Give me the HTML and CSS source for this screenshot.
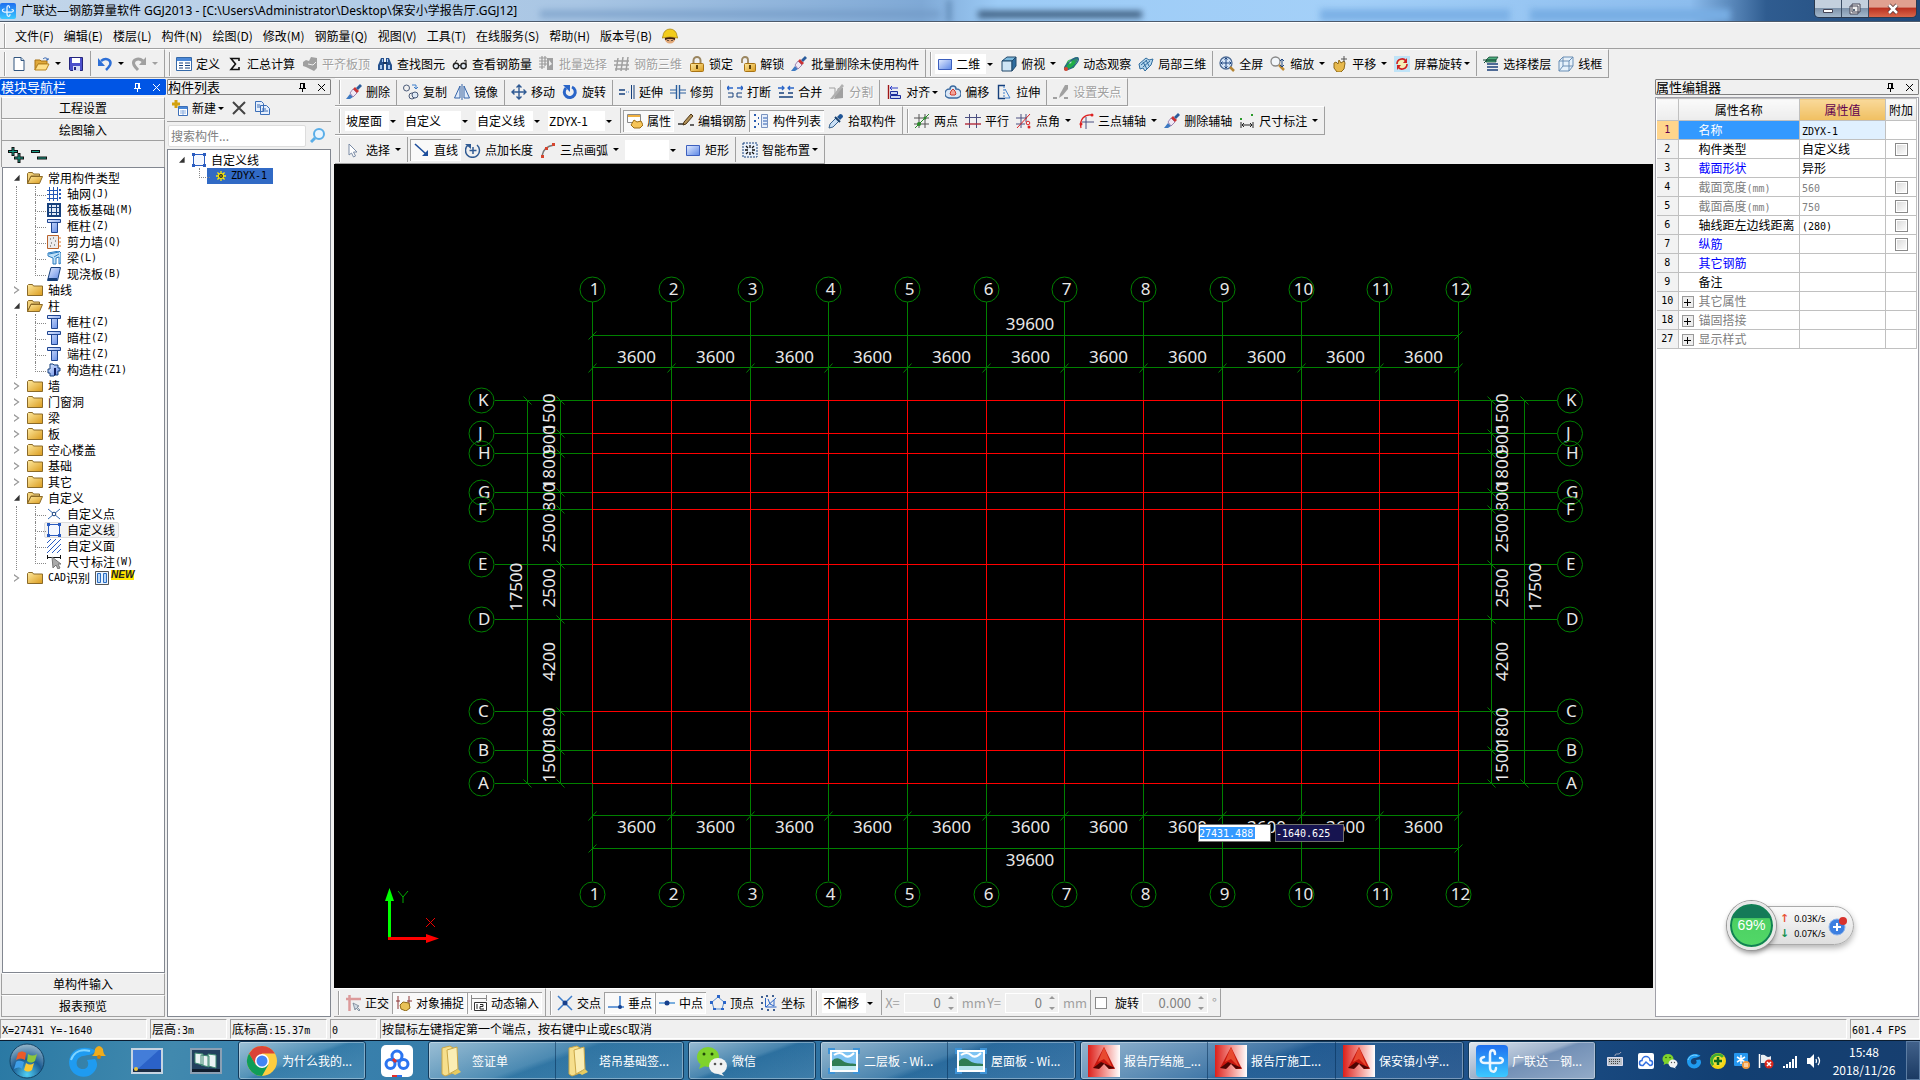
FILE: index.html
```html
<!DOCTYPE html>
<html lang="zh-CN">
<head>
<meta charset="utf-8">
<title>广联达—钢筋算量软件 GGJ2013</title>
<link rel="stylesheet" href="styles.css">
</head>
<body>
<svg class="sprite" aria-hidden="true">
<defs>
<linearGradient id="gBlue" x1="0" y1="0" x2="1" y2="1"><stop offset="0" stop-color="#e4edff"/><stop offset="1" stop-color="#5b86e6"/></linearGradient>
<linearGradient id="gGold" x1="0" y1="0" x2="1" y2="1"><stop offset="0" stop-color="#ffeaa0"/><stop offset="1" stop-color="#d99a1c"/></linearGradient>
<linearGradient id="gRed" x1="0" y1="0" x2="1" y2="0"><stop offset="0" stop-color="#dd1f1a"/><stop offset=".6" stop-color="#f5a7a2"/><stop offset="1" stop-color="#fff"/></linearGradient>
<radialGradient id="gOrb" cx=".5" cy=".9" r=".9"><stop offset="0" stop-color="#4fd0f5"/><stop offset=".5" stop-color="#1c5c93"/><stop offset="1" stop-color="#9ab9cc"/></radialGradient>
<linearGradient id="gApp" x1="0" y1="0" x2="0" y2="1"><stop offset="0" stop-color="#1e6ff0"/><stop offset="1" stop-color="#3cc9ff"/></linearGradient>
</defs>
<symbol id="new" viewBox="0 0 16 16"><path d="M3 1.500h7l3 3v10H3z" fill="#fff" stroke="#31557f"/><path d="M10 1.500v3h3" fill="#cfe0f4" stroke="#31557f"/></symbol>
<symbol id="open" viewBox="0 0 16 16"><path d="M1 4h5l1 1h6v3H4l-3 6z" fill="#e0a93a" stroke="#a87314"/><path d="M4 8h11l-3 6H1z" fill="#ffe08a" stroke="#b98520"/><path d="M9 3c2-2 4-1 5 1m0-2v2h-2" fill="none" stroke="#2b5fb0"/></symbol>
<symbol id="save" viewBox="0 0 16 16"><path d="M1.500 1.500h13v13h-12l-1-1z" fill="#4c50cc" stroke="#24257c"/><path d="M4 2h8v5H4z" fill="#fff"/><path d="M5 10h7v5H5z" fill="#d6dbf5"/><path d="M6 11h2v3H6z" fill="#24257c"/></symbol>
<symbol id="undo" viewBox="0 0 16 16"><path d="M4 5c5-4 11-1 9 4-1 2-2 3-4 5" fill="none" stroke="#2d6fd6" stroke-width="2.500"/><path d="M1 2v8h7z" fill="#2d6fd6"/></symbol>
<symbol id="redo" viewBox="0 0 16 16"><path d="M12 5C7 1 1 4 3 9c1 2 2 3 4 5" fill="none" stroke="#a0a0a0" stroke-width="3"/><path d="M15 1v8H8z" fill="#a0a0a0"/></symbol>
<symbol id="define" viewBox="0 0 16 16"><path d="M.5 1.500h15v13H.5z" fill="#fff" stroke="#3569a8"/><path d="M1 2h14v3H1z" fill="#4a88d8"/><path d="M3 7h4M3 9.500h4M3 12h4M9 7h5M9 9.500h5M9 12h5" stroke="#16407c"/></symbol>
<symbol id="sigma" viewBox="0 0 16 16"><path d="M12 5V2.500H4L8.500 8 4 13.500h8V11" fill="none" stroke="#111" stroke-width="1.600"/></symbol>
<symbol id="flat" viewBox="0 0 16 16"><path d="M1 6l3-2 3 1 2-4 6 1v10l-3 3-6-3-2-1-3-1z" fill="#a0a0a0"/><path d="M6 8l5 1 3-3" fill="none" stroke="#eee"/></symbol>
<symbol id="find" viewBox="0 0 16 16"><path d="M2 7l2-5h3v12H1V9zM9 2h3l2 5 1 2v5H9z" fill="#24508d"/><path d="M3 9h2v4H3zM11 9h2v4h-2zM5 3h1v3H5zM10 3h1v3h-1z" fill="#a8c8f0"/><path d="M6 6h4v2H6z" fill="#16335f"/></symbol>
<symbol id="glasses" viewBox="0 0 16 16"><circle cx="4" cy="10" r="2.700" fill="#dfe8f2" stroke="#222" stroke-width="1.400"/><circle cx="11.500" cy="10" r="2.700" fill="#dfe8f2" stroke="#222" stroke-width="1.400"/><path d="M6.500 9.500h2M1.500 9L5 4M14 9V4l-2 1" fill="none" stroke="#222"/></symbol>
<symbol id="batch" viewBox="0 0 16 16"><path d="M0 2h8M0 5h8M0 8h8M0 11h6M3 0v13M6 0v10" stroke="#999" stroke-width="1.200"/><path d="M8 2h6v12H8z" fill="#a0a0a0"/><path d="M10 4v6l3-2z" fill="#eee"/></symbol>
<symbol id="rebar3" viewBox="0 0 16 16"><path d="M0 5h15M0 9h15M1 13h14M4 2L2 15M9 1L7 15M14 1l-2 14" stroke="#a0a0a0" stroke-width="1.500"/></symbol>
<symbol id="lock" viewBox="0 0 16 16"><path d="M4.500 8V4.500a3.500 3.500 0 0 1 7 0V8" fill="none" stroke="#9b8660" stroke-width="2"/><rect x="1.500" y="7.500" width="13" height="8" rx="1" fill="url(#gGold)" stroke="#a87314"/><path d="M7 9h2v4H7z" fill="#5f430a"/></symbol>
<symbol id="unlock" viewBox="0 0 16 16"><path d="M2 7V4a3 3 0 0 1 6 0v4" fill="none" stroke="#9b8660" stroke-width="1.800"/><rect x="4.500" y="7.500" width="11" height="8" rx="1" fill="url(#gGold)" stroke="#a87314"/><path d="M9 9h2v4H9z" fill="#5f430a"/></symbol>
<symbol id="brush" viewBox="0 0 16 16"><path d="M0 15l4-5 3 3-3 2z" fill="#3d79c2"/><path d="M4 9l3-4 4 4-4 4z" fill="#f0e8f4" stroke="#7a5a96" stroke-width=".7"/><path d="M7 5l2-2 4 4-2 2z" fill="#c33"/><path d="M10 4l4-4 2 2-4 4z" fill="#2a5c9c"/></symbol>
<symbol id="rect" viewBox="0 0 16 16"><path d="M1.500 3.500h13v10h-13z" fill="url(#gBlue)" stroke="#3c5fbe"/></symbol>
<symbol id="cube" viewBox="0 0 16 16"><path d="M1 5l5-4h9l-3 4z" fill="#7cb9dd" stroke="#22496b"/><path d="M1 5h10v10H1z" fill="#cfe5f5" stroke="#22496b"/><path d="M11 5l4-4v9l-4 5z" fill="#2f6c9e" stroke="#22496b"/></symbol>
<symbol id="orbit" viewBox="0 0 16 16"><path d="M1 13C0 9 10 0 15 1c2 4-7 13-13 13z" fill="#2f8f6a"/><circle cx="8" cy="8" r="4.500" fill="#1fae47"/><circle cx="7" cy="6" r="1.500" fill="#b5f0bf"/><path d="M2 14C0 10 11 1 15 2c2 3-6 12-13 12" fill="none" stroke="#2a5c8e" stroke-width="1.200"/><circle cx="3" cy="13" r="2" fill="#d6452e"/></symbol>
<symbol id="local3" viewBox="0 0 16 16"><path d="M1 8l7-6 3 2 4-1-2 6-6 6-2-3-3 1z" fill="#b7d8ee" stroke="#2f6c9e"/><path d="M3 9l6-5M5 11l7-6M8 4l3 6M5 6l4 7" stroke="#2f6c9e"/></symbol>
<symbol id="full" viewBox="0 0 16 16"><circle cx="7" cy="7" r="6" fill="#d8e8fa" stroke="#4c6a94" stroke-width="1.300"/><path d="M11 11l4 4" stroke="#b58534" stroke-width="2.500"/><path d="M7 2v10M2 7h10M5.500 3.500L7 2l1.500 1.500M5.500 10.500L7 12l1.500-1.500M3.500 5.500L2 7l1.500 1.500M10.500 5.500L12 7l-1.500 1.500" fill="none" stroke="#1d4480"/></symbol>
<symbol id="zoomi" viewBox="0 0 16 16"><circle cx="5.500" cy="5.500" r="4.500" fill="#f2f6fa" stroke="#888" stroke-width="1.300"/><path d="M9 9l5 5" stroke="#c08a35" stroke-width="2.500"/><path d="M12 3v7M10 5l2-2 2 2M10 9l2 2 2-2" fill="none" stroke="#1d4480"/></symbol>
<symbol id="hand" viewBox="0 0 16 16"><path d="M2 7l2-1 2 2 1-4 2 3 3-2 1 2-1 6-3 3H5L2 12z" fill="#e7b94c" stroke="#8f6a18"/><path d="M12 0v6M9 3h6" stroke="#555"/></symbol>
<symbol id="rot" viewBox="0 0 16 16"><path d="M0 0h16v16H0z" fill="#bfe3f7"/><path d="M4 4h9v9H4z" fill="#f4efb5"/><path d="M3 8a5 5 0 0 1 9-3M13 8a5 5 0 0 1-9 3" fill="none" stroke="#d02020" stroke-width="1.600"/><path d="M13 2v5H9zM3 14V9h4z" fill="#d02020"/></symbol>
<symbol id="floors" viewBox="0 0 16 16"><path d="M3 4l3-3h9l-2 3zM3 4h10v2H3z" fill="#4fae7d" stroke="#154d38" stroke-width=".8"/><path d="M4 8h11M4 11h11M4 14h11" stroke="#1a3f78" stroke-width="1.600"/><path d="M1 7l3-3M0 4h3" stroke="#154d38"/></symbol>
<symbol id="wire" viewBox="0 0 16 16"><path d="M1 5l4-4h10v9l-4 5H1zM1 5h10v10M11 5l4-4M5 1v9h10M5 10l-4 5" fill="#e5f1fb" stroke="#6a8fb5"/></symbol>
<symbol id="copy" viewBox="0 0 16 16"><circle cx="3.500" cy="4" r="3" fill="none" stroke="#4a5a78"/><circle cx="9" cy="12" r="3" fill="none" stroke="#4a5a78"/><circle cx="12" cy="11" r="3" fill="#dde8f6" stroke="#4a5a78"/><path d="M9 1h4v4m-2-2l2 2 2-2" fill="none" stroke="#3e7ecb"/></symbol>
<symbol id="mirror" viewBox="0 0 16 16"><path d="M6 2v12H.5zM10 2v12h5.500z" fill="#e1ecfb" stroke="#3564a8"/><path d="M8 0v16" stroke="#3564a8"/></symbol>
<symbol id="move" viewBox="0 0 16 16"><path d="M8 1v14M1 8h14M5.500 3.500L8 1l2.500 2.500M5.500 12.500L8 15l2.500-2.500M3.500 5.500L1 8l2.500 2.500M12.500 5.500L15 8l-2.500 2.500" fill="none" stroke="#2f5a93" stroke-width="1.400"/></symbol>
<symbol id="rotate" viewBox="0 0 16 16"><path d="M10 3a5.500 5.500 0 1 1-6 1" fill="none" stroke="#2a65c8" stroke-width="3"/><path d="M1 1h7v7z" fill="#2a65c8"/></symbol>
<symbol id="extend" viewBox="0 0 16 16"><path d="M0 6h6M0 10h6" stroke="#16407c" stroke-width="1.500"/><path d="M7 8h4" stroke="#3e7ecb" stroke-dasharray="1 1"/><path d="M12.500 1v14M15 1v14" stroke="#16407c"/></symbol>
<symbol id="trim" viewBox="0 0 16 16"><path d="M0 6h6M0 9h6M10 6h6M10 9h6" stroke="#2a5f9e"/><path d="M6.500 1v14M9.500 1v14" stroke="#2a5f9e" stroke-width="1.400"/></symbol>
<symbol id="brk" viewBox="0 0 16 16"><path d="M0 4h6M2 2L0 4l2 2M10 4h6M14 2l2 2-2 2" fill="none" stroke="#2a65c8" stroke-width="1.300"/><path d="M1 9h5v4H1M15 9h-5v4h5" fill="none" stroke="#16407c"/></symbol>
<symbol id="merge" viewBox="0 0 16 16"><path d="M0 4h6M4 2l2 2-2 2M10 4h6M12 2l-2 2 2 2" fill="none" stroke="#2a65c8" stroke-width="1.300"/><path d="M1 9h5M1 13h14M15 9h-5" fill="none" stroke="#16407c" stroke-width="1.400"/></symbol>
<symbol id="split" viewBox="0 0 16 16"><path d="M0 4h6v8h8" fill="none" stroke="#a0a0a0"/><path d="M5 15l4-11h5v10z" fill="#a0a0a0"/><path d="M13 0l2 2L4 15l-3 0z" fill="#b0b0b0"/></symbol>
<symbol id="align" viewBox="0 0 16 16"><path d="M2.500 1v14" stroke="#a01616" stroke-width="1.400"/><path d="M4 4h8M6 2L4 4l2 2" fill="none" stroke="#2a3cc8"/><path d="M4.500 7.500h7v3h-7zM4.500 11.500h10v3h-10z" fill="#cdd6f5" stroke="#1c2d9c"/></symbol>
<symbol id="offset" viewBox="0 0 16 16"><path d="M5 5a3 3 0 0 1 6 0 4.500 4.500 0 0 1 1 9H4a4.500 4.500 0 0 1 1-9z" fill="#d9e7f6" stroke="#3b6aa0" stroke-width="1.500"/><path d="M6 7l2-2 2 2 1 3-1 1H6l-1-1z" fill="#f2a59b" stroke="#cf3b2c"/></symbol>
<symbol id="stretch" viewBox="0 0 16 16"><path d="M9 1.500H2.500v13H9" fill="none" stroke="#16407c" stroke-width="1.400"/><path d="M8 2v12" stroke="#3e7ecb" stroke-dasharray="2 1"/><path d="M9 5l5 9H9" fill="none" stroke="#3e7ecb"/></symbol>
<symbol id="grip" viewBox="0 0 16 16"><path d="M0 14h4M11 14h4" stroke="#a0a0a0" stroke-width="2"/><path d="M6 14l1-4 5-9h3v4l-5 6z" fill="#a0a0a0"/></symbol>
<symbol id="prop" viewBox="0 0 16 16"><path d="M.5 1.500h13v8H.5z" fill="#fff" stroke="#888"/><path d="M1 2h12v2H1z" fill="#f0b040"/><path d="M4 12l3-5 3 2 4-1 2 4-3 3H7z" fill="#f6c558" stroke="#9c6d14"/></symbol>
<symbol id="edit" viewBox="0 0 16 16"><path d="M0 11h7M12 12h4" stroke="#333" stroke-width="1.600"/><path d="M5 12l1-3 7-8 2 2-7 8z" fill="#b4935a" stroke="#4a3414"/></symbol>
<symbol id="list" viewBox="0 0 16 16"><path d="M1 1h2v2H1zM1 7h2v2H1zM1 13h2v2H1zM5 4h1v2H5zM5 10h1v2H5z" fill="#2a5cb0"/><path d="M8.500 1.500h6v13h-6z" fill="#e8f0fc" stroke="#7a94c0"/><path d="M10 5h4M10 8h4M10 11h4" stroke="#2a5cb0"/></symbol>
<symbol id="pick" viewBox="0 0 16 16"><path d="M1 15l1-4 6-6 3 3-6 6z" fill="#c9dff5" stroke="#35618f"/><path d="M7 4l5 5" stroke="#173f6c" stroke-width="2"/><path d="M9 4l3-3q3 0 3 3l-3 3z" fill="#1f5596"/></symbol>
<symbol id="twop" viewBox="0 0 16 16"><path d="M0 5h15M0 11h15M5 1v14M11 1v14" stroke="#555"/><path d="M1 15L15 1" stroke="#2a8a2a"/><circle cx="5" cy="11" r="2" fill="#2a8a2a"/><circle cx="11" cy="5" r="1.500" fill="#2a8a2a"/></symbol>
<symbol id="para" viewBox="0 0 16 16"><path d="M4.500 1v14M11.500 1v14" stroke="#4a4f80"/><path d="M0 4.500h16" stroke="#4a4f80"/><path d="M0 11h16" stroke="#b02a3c" stroke-width="1.400"/></symbol>
<symbol id="pang" viewBox="0 0 16 16"><path d="M0 5h11M0 11h9M5 1v14M10 1v8" stroke="#4a4f80"/><path d="M1 15L14 1" stroke="#d22"/><circle cx="12" cy="10" r="1.800" fill="none" stroke="#d22"/><circle cx="13" cy="14" r="1.500" fill="#d22"/></symbol>
<symbol id="arc3" viewBox="0 0 16 16"><path d="M3 15C1 6 7 1 14 2" fill="none" stroke="#d22" stroke-width="1.300"/><path d="M8 4v12M4 9h12" stroke="#4a4f80"/><circle cx="3" cy="11" r="1.500" fill="#d22"/><circle cx="14" cy="2" r="1.500" fill="#d22"/></symbol>
<symbol id="dimi" viewBox="0 0 16 16"><path d="M1 5h2v2H1zM12 1h2v2h-2z" fill="#2a9a2a"/><path d="M2 9v6M14 9v6M3 12h10M5 10l-2 2 2 2M11 10l2 2-2 2" fill="none" stroke="#222"/></symbol>
<symbol id="sel" viewBox="0 0 16 16"><path d="M3 2l8 8H7.500l2 4-2 1-2-4L3 13z" fill="#fff" stroke="#7a8ba5"/></symbol>
<symbol id="line" viewBox="0 0 16 16"><path d="M1 2l11 10" stroke="#1d4e9c" stroke-width="1.600"/><path d="M14 8v6H8z" fill="#1d4e9c"/></symbol>
<symbol id="plen" viewBox="0 0 16 16"><path d="M8 5v7M4.500 8.500h7M3 3a7 7 0 1 0 9 0" fill="none" stroke="#2f5a93" stroke-width="1.500"/><path d="M0 2h6v5z" fill="#2f5a93"/></symbol>
<symbol id="arcp" viewBox="0 0 16 16"><path d="M2 14C3 7 7 4 14 3" fill="none" stroke="#777" stroke-width="1.500"/><path d="M1 13h3v3H1zM5 5h3v3H5zM12 1h3v3h-3z" fill="#d6452e"/></symbol>
<symbol id="smart" viewBox="0 0 16 16"><path d="M1 1h14v14H1z" fill="#eaf1fb" stroke="#16407c" stroke-dasharray="2 1"/><path d="M8 3v3M8 10v3M3 8h3M10 8h3M4 4l2 2M12 4l-2 2M4 12l2-2M12 12l-2-2" stroke="#111" stroke-width="1.300"/></symbol>
<symbol id="ortho" viewBox="0 0 16 16"><path d="M1 4h15M4.500 0v16" stroke="#dc9a9a" stroke-width="2.500"/><path d="M8 8l6 3-2 1 3 3-1 1-3-3-1 2z" fill="#cfd9e2" stroke="#69798a" stroke-width=".7"/></symbol>
<symbol id="snap" viewBox="0 0 16 16"><path d="M2 1v13M13 1v13M0 6h4M11 6h5" stroke="#8c3434"/><path d="M4 10l3-3 6 1 1 5-4 3-5-2z" fill="#e8c158" stroke="#8f6a18"/></symbol>
<symbol id="dyn" viewBox="0 0 16 16"><path d="M.5 0v15M0 3.500h16M15.500 0v6" stroke="#888"/><path d="M3.500 7.500h12v8h-12z" fill="#fff" stroke="#333"/><path d="M6 9v5M9 9.500h3v2H9v2.500h4" fill="none" stroke="#222"/></symbol>
<symbol id="cross" viewBox="0 0 16 16"><path d="M1 1l14 14M15 1L1 15" stroke="#3e7ecb" stroke-width="1.500"/><circle cx="8" cy="8" r="2.500" fill="#163f8c"/></symbol>
<symbol id="perp" viewBox="0 0 16 16"><path d="M0 12h16M12 1v11" stroke="#3e7ecb" stroke-width="1.600"/><circle cx="12" cy="12" r="2" fill="#163f8c"/></symbol>
<symbol id="mid" viewBox="0 0 16 16"><path d="M0 8h16" stroke="#5b9bd8" stroke-width="1.600"/><circle cx="8" cy="8" r="2.500" fill="#163f8c"/></symbol>
<symbol id="vert" viewBox="0 0 16 16"><path d="M8 2l6 5-2 7H4L2 7z" fill="none" stroke="#5b8fd0"/><path d="M7 0h3v3H7zM0 6h3v3H0zM13 6h3v3h-3zM3 13h3v2H3zM11 13h3v2h-3z" fill="#2a65c8"/></symbol>
<symbol id="coord" viewBox="0 0 16 16"><path d="M4.500 3v9h11M5 12l10-9M7 4l2 5 4 2V5" fill="none" stroke="#2a65c8"/><path d="M0 1h2v2H0zM5 0h2v2H5zM11 0h2v2h-2zM0 13h2v2H0zM6 14h2v2H6zM12 14h2v2h-2zM0 7h2v2H0z" fill="#3f5f90"/></symbol>
<symbol id="addc" viewBox="0 0 16 16"><path d="M4 0v8M0 4h8" stroke="#d3a10f" stroke-width="3"/><path d="M6.500 6.500h9v9h-9z" fill="#fff" stroke="#3c6fb8"/><path d="M7 7h8v2H7z" fill="#4a88d8"/><path d="M8 11h6M8 13h6M11 10v5" stroke="#8fb0e0"/></symbol>
<symbol id="del" viewBox="0 0 16 16"><path d="M2 2l12 12M14 2L2 14" stroke="#444" stroke-width="2"/></symbol>
<symbol id="cpy2" viewBox="0 0 16 16"><path d="M1.500 1.500h6l2 2v8h-8zM6.500 5.500h6l3 3v6h-9z" fill="#e6effc" stroke="#3c6fb8"/><path d="M8 9h4M8 11h6M3 5h3M3 7h3" stroke="#3c6fb8"/></symbol>
<symbol id="mag" viewBox="0 0 16 16"><circle cx="9" cy="6" r="5" fill="#e9f5ff" stroke="#5aaee8" stroke-width="2"/><path d="M5 10l-4 4" stroke="#5aaee8" stroke-width="3"/></symbol>
<symbol id="folder" viewBox="0 0 16 12"><path d="M.5 11.500V1.500l1-1h4l1 1.500h9v9.500z" fill="url(#gGold)" stroke="#8b6a28"/></symbol>
<symbol id="foldero" viewBox="0 0 16 12"><path d="M.5 11.500V1.500l1-1h4l1 1.500h6v2H4z" fill="#f3d27a" stroke="#8b6a28"/><path d="M.5 11.500l3.500-7h11.500l-3 7z" fill="url(#gGold)" stroke="#8b6a28"/></symbol>
<symbol id="grid" viewBox="0 0 14 14"><path d="M0 3.500h11M0 7.500h11M0 11.500h11M2.500 0v14M6.500 0v14M10.500 0v14" stroke="#2559b8"/><path d="M12 2h2v2h-2zM12 6h2v2h-2zM12 10h2v2h-2z" fill="#2559b8"/></symbol>
<symbol id="raft" viewBox="0 0 14 14"><path d="M1 1h12v12H1z" fill="#dfe9f8" stroke="#16407c" stroke-width="2"/><path d="M4.500 1v12M9.500 1v12M1 4.500h12M1 9.500h12" stroke="#16407c"/></symbol>
<symbol id="col" viewBox="0 0 14 14"><path d="M.5.5h13v3h-3v10h-6v-10h-4z" fill="url(#gBlue)" stroke="#1f4590"/><path d="M1 3.500h12" stroke="#1f4590"/></symbol>
<symbol id="wall" viewBox="0 0 14 14"><path d="M.5.500h11v13H.5z" fill="#ececec" stroke="#b8622c"/><path d="M3 4h1M6 3h1M8 6h1M4 8h1M7 10h1M3 11h1" stroke="#444"/><path d="M11 3h3M11 7h3M11 11h3" stroke="#d9762b"/></symbol>
<symbol id="beam" viewBox="0 0 14 14"><path d="M1 2l11-2 2 2v10l-2 1V6L9 7v6H6V7L1 5z" fill="#bfe0f8" stroke="#2b7cc0"/><path d="M2 3l10-2M7 6l5-3" stroke="#2b7cc0"/></symbol>
<symbol id="slab" viewBox="0 0 14 14"><path d="M4 .5h9.500l-3 13H.5z" fill="url(#gBlue)" stroke="#16407c"/><path d="M1 12h9" stroke="#16407c" stroke-width="2"/></symbol>
<symbol id="scol" viewBox="0 0 14 14"><path d="M3 1h3l1 1h4v3h2v3h-2v4H8l-1 1H3v-3H1V6h2z" fill="url(#gBlue)" stroke="#16407c"/><path d="M8 5v7" stroke="#101f60" stroke-width="2"/></symbol>
<symbol id="cpt" viewBox="0 0 14 14"><path d="M1 2l12 10M13 2L1 12" stroke="#2f66b0"/><circle cx="7" cy="7" r="1.800" fill="#fff" stroke="#16407c"/></symbol>
<symbol id="cline" viewBox="0 0 14 14"><path d="M1.500 1.500h11v11h-11z" fill="#f4f8ff" stroke="#2a5cc0"/><path d="M0 0h3v3H0zM11 0h3v3h-3zM0 11h3v3H0zM11 11h3v3h-3z" fill="#2a5cc0"/></symbol>
<symbol id="cface" viewBox="0 0 14 14"><path d="M0 4l4-4M0 9l9-9M0 14L14 0M5 14l9-9M10 14l4-4" stroke="#2a5cc0"/></symbol>
<symbol id="cdim" viewBox="0 0 14 14"><path d="M.5 0v4M13.500 0v4M0 2.500h14" stroke="#111"/><path d="M5 2l9 7H11l2 4-2 1-2-4-3 3z" fill="#aaa" stroke="#777"/></symbol>
<symbol id="cad" viewBox="0 0 14 14"><path d="M.5.500h13v13H.5z" fill="#eaf4ff" stroke="#555"/><path d="M2.500 2.500h3v9h-3zM8.500 2.500h3v9h-3z" fill="#bcd9f8" stroke="#2a6cc0"/></symbol>
<symbol id="gear" viewBox="0 0 14 14"><path d="M7 0v14M0 7h14M2 2l10 10M12 2L2 12" stroke="#fce808" stroke-width="1.800"/><circle cx="7" cy="7" r="3.500" fill="#222" stroke="#fce808" stroke-width="1.500"/><circle cx="7" cy="7" r="1" fill="#fce808"/></symbol>
<symbol id="pin" viewBox="0 0 9 9"><path d="M2.500 0v5M2 .5h5M5.500 0v5M6.500 0v5M1 5.500h7M4.500 6v3" fill="none" stroke="currentColor"/></symbol>
<symbol id="x" viewBox="0 0 9 9"><path d="M1 1l7 7M8 1L1 8" stroke="currentColor"/></symbol>
<symbol id="app" viewBox="0 0 32 32"><rect width="32" height="32" rx="4" fill="url(#gApp)"/><path d="M19 9c0-5-5-5-5 0v13c0 6 6 6 6 1M8 12c-5 1-4 6 1 6h14c5 0 5-5 1-5" fill="none" stroke="#eaf6ff" stroke-width="2.500" stroke-linecap="round"/></symbol>
<symbol id="helmet" viewBox="0 0 16 16"><circle cx="8" cy="10" r="5.500" fill="#e2a878"/><path d="M1 8a7 7 0 0 1 14 0l1 2-8-1-8 1z" fill="#f2cc1c" stroke="#a27c0a" stroke-width=".7"/><path d="M3 10c3-1 7-1 10 0v2l-3-1H6l-3 1z" fill="#3a2010"/><path d="M6 12v1M10 12v1" stroke="#000"/></symbol>
<symbol id="g" viewBox="0 0 32 32"><path d="M29 5C20-1 3 1 2 16c0 14 16 19 24 11 5-5 5-10 2-14l-8 1c3 5 0 9-4 9-9 0-8-12 0-13 5-1 9-1 13-5" fill="#1f9bf0"/><path d="M4 14C7 5 15 3 23 5" fill="none" stroke="#7fd4ff" stroke-width="2"/></symbol>
<symbol id="desk" viewBox="0 0 32 26"><path d="M1 1h30v24H1z" fill="#2b62c8" stroke="#c6d4e2" stroke-width="2"/><path d="M2 21h28v3H2z" fill="#1c2c44"/><path d="M2 2h26L8 20H2z" fill="#5b97ea" opacity=".5"/><circle cx="5" cy="21" r="2" fill="#e9c43a"/></symbol>
<symbol id="flip" viewBox="0 0 32 26"><path d="M1 1h30v24H1z" fill="#23405f" stroke="#8ba0b4" stroke-width="2"/><path d="M5 5l8 1v11l-8-2zM11 7l8 1v11l-8-2zM18 6l8 1v13l-8-2z" fill="#eaf2f4" stroke="#3f8a72"/><path d="M2 21h28v3H2z" fill="#101c2c"/></symbol>
<symbol id="chrome" viewBox="0 0 32 32"><circle cx="16" cy="16" r="15" fill="#ffcd40"/><path d="M3 8.500A15 15 0 0 1 29 8.500H16L9.500 20z" fill="#db4437"/><path d="M3 8.500A15 15 0 0 0 16 31l6.500-11.500-13 0z" fill="#0f9d58"/><circle cx="16" cy="16" r="7" fill="#fff"/><circle cx="16" cy="16" r="5.500" fill="#4285f4"/></symbol>
<symbol id="baidu" viewBox="0 0 32 32"><rect width="32" height="32" rx="5" fill="#fff"/><circle cx="16" cy="11" r="5" fill="none" stroke="#2b74f0" stroke-width="3"/><circle cx="9.500" cy="19" r="4.500" fill="none" stroke="#2b74f0" stroke-width="3"/><circle cx="22.500" cy="19" r="4.500" fill="none" stroke="#2b74f0" stroke-width="3"/><path d="M12 14l3 3" stroke="#e3302c" stroke-width="3"/><path d="M11 30h5v2h-5z" fill="#e3302c"/><path d="M16 30h5v2h-5z" fill="#2b74f0"/></symbol>
<symbol id="wfold" viewBox="0 0 26 32"><path d="M3 3l8-2 3 2v25l-8 3-3-2z" fill="#f6df8c" stroke="#c9a748"/><path d="M8 5l10-3 1 22-9 5z" fill="#fbeeb4" stroke="#c9a748"/><path d="M13 28l6-4 3 3-6 3z" fill="#e8cb5f"/></symbol>
<symbol id="wechat" viewBox="0 0 32 32"><ellipse cx="12" cy="12" rx="11" ry="10" fill="#7fd32c"/><path d="M5 18l-2 6 6-3z" fill="#7fd32c"/><circle cx="8" cy="9" r="1.500" fill="#234a08"/><circle cx="16" cy="9" r="1.500" fill="#234a08"/><ellipse cx="22" cy="21" rx="9" ry="8" fill="#f1f3f3"/><path d="M25 27l3 4-6-2z" fill="#f1f3f3"/><circle cx="19" cy="19" r="1.300" fill="#555"/><circle cx="25" cy="19" r="1.300" fill="#555"/></symbol>
<symbol id="photo" viewBox="0 0 32 26"><path d="M0 0h7v6H0zM25 0h7v6h-7zM0 20h7v6H0zM25 20h7v6h-7z" fill="#3e93d6"/><path d="M3 3h26v20H3z" fill="#7ec3f2" stroke="#fff" stroke-width="2"/><path d="M4 13c4-4 7-3 11 0s8 2 13 3v3H4z" fill="#2f7d53"/><path d="M4 18h24v4H4z" fill="#b9e6ee"/><path d="M6 7q6-4 10 0t10-2" fill="none" stroke="#fff" stroke-width="2"/></symbol>
<symbol id="acad" viewBox="0 0 32 32"><path d="M0 0h32v32H0z" fill="url(#gRed)"/><path d="M16 2L5 23h7l4-5 5 6h6z" fill="#c8160e"/><path d="M16 2l-6 15 6-3 8 8z" fill="#e84a30"/><path d="M5 23l8-6 14 6-6 1-5-5-5 5z" fill="#4d0503"/></symbol>
<symbol id="orb" viewBox="0 0 36 36"><circle cx="18" cy="18" r="17" fill="url(#gOrb)" stroke="#134366"/><path d="M9 10c3-2 5-2 8 0l-1 7c-3-2-6-2-9 0z" fill="#ec5a28"/><path d="M19 11c3 2 6 2 9 0l-2 7c-3 2-5 2-8 0z" fill="#8cc63c"/><path d="M7 19c3-2 5-1 8 0l-2 7c-2-2-5-2-8 0z" fill="#3f9ee8"/><path d="M17 20c3 2 5 2 8 0l-2 7c-3 2-5 2-8 0z" fill="#fbc831"/></symbol>
<symbol id="kbd" viewBox="0 0 16 16"><path d="M8 5c0-4 4 0 6-4" fill="none" stroke="#aab"/><path d="M.5 6.500h15v8H.5z" fill="#b9c0c8" stroke="#dde"/><path d="M2 8.500h12M2 10.500h12M4 12.500h8" stroke="#444" stroke-dasharray="1 1"/></symbol>
<symbol id="tcloud" viewBox="0 0 16 16"><rect width="16" height="16" rx="2" fill="#fff"/><path d="M4 12.500a2.500 2.500 0 0 1 0-5 4 4 0 0 1 8 0 2.500 2.500 0 0 1 0 5L8 9l-3 3.500z" fill="none" stroke="#3470e0" stroke-width="1.500"/></symbol>
<symbol id="t360" viewBox="0 0 16 16"><circle cx="8" cy="8" r="8" fill="#f5d614"/><path d="M0 8a8 8 0 0 1 14-5L2 13z" fill="#3fae31"/><circle cx="8" cy="8" r="5" fill="#f3e23c"/><path d="M8 4v8M4 8h8" stroke="#0c6a1d" stroke-width="2.500"/></symbol>
<symbol id="tstar" viewBox="0 0 16 16"><rect width="14" height="13" rx="1" fill="#2597f0"/><path d="M7 2v9M3 4l8 5M11 4L3 9" stroke="#fff" stroke-width="1.500"/><circle cx="12" cy="12" r="4" fill="#f39a3c"/><path d="M10 11h4M10 13h4" stroke="#fff"/></symbol>
<symbol id="tflag" viewBox="0 0 16 16"><path d="M1.500 1v14" stroke="#fff" stroke-width="1.500"/><path d="M3 2q3-1 5 1t5 0v7H3z" fill="#e9eef3"/><circle cx="11" cy="11" r="4.500" fill="#d9261c"/><path d="M9 9l4 4M13 9l-4 4" stroke="#fff" stroke-width="1.500"/></symbol>
<symbol id="tnet" viewBox="0 0 16 16"><path d="M1 13h2v2H1zM4 11h2v4H4zM7 9h2v6H7zM10 6h2v9h-2zM13 3h2v12h-2z" fill="#fff"/></symbol>
<symbol id="tvol" viewBox="0 0 16 16"><path d="M1 5h3l4-4v14l-4-4H1z" fill="#fff"/><path d="M10 6q1 2 0 4M12 4q3 4 0 8" fill="none" stroke="#fff" stroke-width="1.300"/></symbol>
</svg>

<header class="title">
  <div class="glass"><i class="g1"></i><i class="g2"></i><i class="g3"></i><i class="g4"></i><i class="g5"></i></div>
  <svg class="i"><use href="#app"/></svg>
  <h1>广联达—钢筋算量软件 GGJ2013 - [C:\Users\Administrator\Desktop\保安小学报告厅.GGJ12]</h1>
  <div class="win"><button aria-label="最小化"><svg viewBox="0 0 12 12"><path d="M1.500 6.500h9v3h-9z" fill="#fff" stroke="#445"/></svg></button><button aria-label="还原"><svg viewBox="0 0 12 12"><path d="M3 1h8v8H3zM1 3h8v8H1z" fill="#eee" stroke="#445"/><path d="M4 6h2v2H4z" fill="#567"/></svg></button><button class="close" aria-label="关闭"><svg viewBox="0 0 12 12"><path d="M2 2l8 8M10 2l-8 8" stroke="#533" stroke-width="4"/><path d="M2 2l8 8M10 2l-8 8" stroke="#fff" stroke-width="2.500"/></svg></button></div>
</header>

<nav class="menu">
  <i class="h"></i>
  <button>文件(F)</button><button>编辑(E)</button><button>楼层(L)</button><button>构件(N)</button><button>绘图(D)</button><button>修改(M)</button><button>钢筋量(Q)</button><button>视图(V)</button><button>工具(T)</button><button>在线服务(S)</button><button>帮助(H)</button><button>版本号(B)</button>
  <svg class="i"><use href="#helmet"/></svg>
</nav>

<div class="bars">
  <div class="bar"><i class="h"></i>
    <button aria-label="新建"><svg class="i"><use href="#new"/></svg></button>
    <button aria-label="打开"><svg class="i"><use href="#open"/></svg><i class="a"></i></button>
    <button aria-label="保存"><svg class="i"><use href="#save"/></svg></button><i class="s"></i>
    <button aria-label="撤销"><svg class="i"><use href="#undo"/></svg><i class="a"></i></button>
    <button aria-label="恢复" class="off"><svg class="i"><use href="#redo"/></svg><i class="a"></i></button>
  </div>
  <div class="bar"><i class="h"></i>
    <button><svg class="i"><use href="#define"/></svg>定义</button>
    <button><svg class="i"><use href="#sigma"/></svg>汇总计算</button>
    <button class="off"><svg class="i"><use href="#flat"/></svg>平齐板顶</button>
    <button><svg class="i"><use href="#find"/></svg>查找图元</button>
    <button><svg class="i"><use href="#glasses"/></svg>查看钢筋量</button>
    <button class="off"><svg class="i"><use href="#batch"/></svg>批量选择</button>
    <button class="off"><svg class="i"><use href="#rebar3"/></svg>钢筋三维</button>
    <button><svg class="i"><use href="#lock"/></svg>锁定</button>
    <button><svg class="i"><use href="#unlock"/></svg>解锁</button>
    <button><svg class="i"><use href="#brush"/></svg>批量删除未使用构件</button>
  </div>
  <div class="bar"><i class="h"></i>
    <label class="combo"><svg class="i"><use href="#rect"/></svg><select class="w40" aria-label="视图模式"><option>二维</option></select></label>
    <button><svg class="i"><use href="#cube"/></svg>俯视<i class="a"></i></button>
    <button><svg class="i"><use href="#orbit"/></svg>动态观察</button>
    <button><svg class="i"><use href="#local3"/></svg>局部三维</button><i class="s"></i>
    <button><svg class="i"><use href="#full"/></svg>全屏</button>
    <button><svg class="i"><use href="#zoomi"/></svg>缩放<i class="a"></i></button>
    <button><svg class="i"><use href="#hand"/></svg>平移<i class="a"></i></button>
    <button><svg class="i"><use href="#rot"/></svg>屏幕旋转<i class="a t"></i></button><i class="s"></i>
    <button><svg class="i"><use href="#floors"/></svg>选择楼层</button>
    <button><svg class="i"><use href="#wire"/></svg>线框</button>
  </div>
</div>

<main>
  <aside class="nav">
    <h2 class="cap on">模块导航栏<svg><use href="#pin"/></svg><svg><use href="#x"/></svg></h2>
    <button class="tab">工程设置</button>
    <button class="tab">绘图输入</button>
    <div class="pm"><svg viewBox="0 0 40 16"><path d="M5 0v9M0 4.500h10M11 6v10M6 11h10" stroke="#111" stroke-width="3"/><path d="M5 1v7M1 4.500h8M11 7v8M7 11h8" stroke="#1aa08a"/><path d="M23 4.500h9M29 11h10" stroke="#111" stroke-width="3"/><path d="M24 4.500h7M30 11h8" stroke="#1aa08a"/></svg></div>
    <ul class="tree">
      <li><span class="r o"><svg><use href="#foldero"/></svg>常用构件类型</span>
        <ul>
          <li><svg><use href="#grid"/></svg>轴网<b>(J)</b></li>
          <li><svg><use href="#raft"/></svg>筏板基础<b>(M)</b></li>
          <li><svg><use href="#col"/></svg>框柱<b>(Z)</b></li>
          <li><svg><use href="#wall"/></svg>剪力墙<b>(Q)</b></li>
          <li><svg><use href="#beam"/></svg>梁<b>(L)</b></li>
          <li><svg><use href="#slab"/></svg>现浇板<b>(B)</b></li>
        </ul></li>
      <li><span class="r"><svg><use href="#folder"/></svg>轴线</span></li>
      <li><span class="r o"><svg><use href="#foldero"/></svg>柱</span>
        <ul>
          <li><svg><use href="#col"/></svg>框柱<b>(Z)</b></li>
          <li><svg><use href="#col"/></svg>暗柱<b>(Z)</b></li>
          <li><svg><use href="#col"/></svg>端柱<b>(Z)</b></li>
          <li><svg><use href="#scol"/></svg>构造柱<b>(Z1)</b></li>
        </ul></li>
      <li><span class="r"><svg><use href="#folder"/></svg>墙</span></li>
      <li><span class="r"><svg><use href="#folder"/></svg>门窗洞</span></li>
      <li><span class="r"><svg><use href="#folder"/></svg>梁</span></li>
      <li><span class="r"><svg><use href="#folder"/></svg>板</span></li>
      <li><span class="r"><svg><use href="#folder"/></svg>空心楼盖</span></li>
      <li><span class="r"><svg><use href="#folder"/></svg>基础</span></li>
      <li><span class="r"><svg><use href="#folder"/></svg>其它</span></li>
      <li><span class="r o"><svg><use href="#foldero"/></svg>自定义</span>
        <ul>
          <li><svg><use href="#cpt"/></svg>自定义点</li>
          <li><span class="hot"><svg><use href="#cline"/></svg>自定义线</span></li>
          <li><svg><use href="#cface"/></svg>自定义面</li>
          <li><svg><use href="#cdim"/></svg>尺寸标注<b>(W)</b></li>
        </ul></li>
      <li><span class="r"><svg><use href="#folder"/></svg><b>CAD</b>识别<svg class="cad"><use href="#cad"/></svg><em>NEW</em></span></li>
    </ul>
    <button class="tab">单构件输入</button>
    <button class="tab">报表预览</button>
  </aside>

  <aside class="list">
    <h2 class="cap">构件列表<svg><use href="#pin"/></svg><svg><use href="#x"/></svg></h2>
    <div class="ltools">
      <button><svg class="i"><use href="#addc"/></svg>新建<i class="a t"></i></button>
      <button aria-label="删除"><svg class="i"><use href="#del"/></svg></button>
      <button aria-label="复制"><svg class="i"><use href="#cpy2"/></svg></button>
    </div>
    <div class="search"><input type="text" placeholder="搜索构件..." aria-label="搜索构件"><button aria-label="搜索"><svg class="i"><use href="#mag"/></svg></button></div>
    <ul class="tree comp">
      <li><span class="r o"><svg class="sq"><use href="#cline"/></svg>自定义线</span>
        <ul><li><span class="cur"><svg><use href="#gear"/></svg><b>ZDYX-1</b></span></li></ul></li>
    </ul>
  </aside>

  <section class="work">
    <div class="bars">
      <div class="bar"><i class="h"></i>
        <button><svg class="i"><use href="#brush"/></svg>删除</button><i class="s"></i>
        <button><svg class="i"><use href="#copy"/></svg>复制</button>
        <button><svg class="i"><use href="#mirror"/></svg>镜像</button><i class="s"></i>
        <button><svg class="i"><use href="#move"/></svg>移动</button>
        <button><svg class="i"><use href="#rotate"/></svg>旋转</button><i class="s"></i>
        <button><svg class="i"><use href="#extend"/></svg>延伸</button>
        <button><svg class="i"><use href="#trim"/></svg>修剪</button><i class="s"></i>
        <button><svg class="i"><use href="#brk"/></svg>打断</button>
        <button><svg class="i"><use href="#merge"/></svg>合并</button>
        <button class="off"><svg class="i"><use href="#split"/></svg>分割</button><i class="s"></i>
        <button><svg class="i"><use href="#align"/></svg>对齐<i class="a t"></i></button>
        <button><svg class="i"><use href="#offset"/></svg>偏移</button>
        <button><svg class="i"><use href="#stretch"/></svg>拉伸</button><i class="s"></i>
        <button class="off"><svg class="i"><use href="#grip"/></svg>设置夹点</button>
      </div>
    </div>
    <div class="bars">
      <div class="bar"><i class="h"></i>
        <select class="w54" aria-label="楼层"><option>坡屋面</option></select>
        <select class="w66" aria-label="构件大类"><option>自定义</option></select>
        <select class="w66" aria-label="构件类型"><option>自定义线</option></select>
        <select class="w66" aria-label="构件"><option>ZDYX-1</option></select><i class="s"></i>
        <button class="dn"><svg class="i"><use href="#prop"/></svg>属性</button>
        <button><svg class="i"><use href="#edit"/></svg>编辑钢筋</button>
        <button class="dn"><svg class="i"><use href="#list"/></svg>构件列表</button>
        <button><svg class="i"><use href="#pick"/></svg>拾取构件</button>
      </div>
      <div class="bar"><i class="h"></i>
        <button><svg class="i"><use href="#twop"/></svg>两点</button>
        <button><svg class="i"><use href="#para"/></svg>平行</button>
        <button><svg class="i"><use href="#pang"/></svg>点角<i class="a"></i></button>
        <button><svg class="i"><use href="#arc3"/></svg>三点辅轴<i class="a"></i></button>
        <button><svg class="i"><use href="#brush"/></svg>删除辅轴</button>
        <button><svg class="i"><use href="#dimi"/></svg>尺寸标注<i class="a"></i></button>
      </div>
    </div>
    <div class="bars">
      <div class="bar"><i class="h"></i>
        <button><svg class="i"><use href="#sel"/></svg>选择<i class="a"></i></button><i class="s"></i>
        <button class="dn"><svg class="i"><use href="#line"/></svg>直线</button>
        <button><svg class="i"><use href="#plen"/></svg>点加长度</button>
        <button><svg class="i"><use href="#arcp"/></svg>三点画弧<i class="a"></i></button>
        <select class="w54" aria-label="画弧方式"><option></option></select>
        <button><svg class="i"><use href="#rect"/></svg>矩形</button><i class="s"></i>
        <button><svg class="i"><use href="#smart"/></svg>智能布置<i class="a t"></i></button>
      </div>
    </div>
    <div class="canvas">
      <svg id="plan" viewBox="334 164 1319 824" role="img" aria-label="轴网平面图"></svg>
      <div class="dynin"><input class="dx" type="text" value="27431.488" aria-label="X 坐标"><input class="dy" type="text" value="-1640.625" aria-label="Y 坐标"></div>
    </div>
    <div class="bars foot">
      <div class="bar"><i class="h"></i>
        <button><svg class="i"><use href="#ortho"/></svg>正交</button>
        <button class="dn"><svg class="i"><use href="#snap"/></svg>对象捕捉</button>
        <button class="dn"><svg class="i"><use href="#dyn"/></svg>动态输入</button>
      </div>
      <div class="bar"><i class="h"></i>
        <button><svg class="i"><use href="#cross"/></svg>交点</button>
        <button class="dn"><svg class="i"><use href="#perp"/></svg>垂点</button>
        <button class="dn"><svg class="i"><use href="#mid"/></svg>中点</button>
        <button><svg class="i"><use href="#vert"/></svg>顶点</button>
        <button><svg class="i"><use href="#coord"/></svg>坐标</button>
      </div>
      <div class="bar"><i class="h"></i>
        <select class="w54" aria-label="偏移方式"><option>不偏移</option></select><i class="s"></i>
        <label class="num">X=<input type="text" value="0" disabled>mm</label>
        <label class="num">Y=<input type="text" value="0" disabled>mm</label><i class="s"></i>
        <label class="chk"><input type="checkbox">旋转</label>
        <label class="num"><input class="wide" type="text" value="0.000" disabled aria-label="旋转角度">°</label>
      </div>
    </div>
  </section>

  <aside class="props">
    <h2 class="cap">属性编辑器<svg><use href="#pin"/></svg><svg><use href="#x"/></svg></h2>
    <div class="pbox">
    <table>
      <colgroup><col class="c1"><col><col class="c3"><col class="c4"></colgroup>
      <thead><tr><th></th><th>属性名称</th><th class="hv">属性值</th><th>附加</th></tr></thead>
      <tbody>
        <tr class="sel"><th>1</th><td>名称</td><td><b>ZDYX-1</b></td><td></td></tr>
        <tr><th>2</th><td>构件类型</td><td>自定义线</td><td><input type="checkbox" aria-label="附加 构件类型"></td></tr>
        <tr><th>3</th><td class="bl">截面形状</td><td>异形</td><td></td></tr>
        <tr class="gr"><th>4</th><td>截面宽度<b>(mm)</b></td><td><b>560</b></td><td><input type="checkbox" aria-label="附加 截面宽度"></td></tr>
        <tr class="gr"><th>5</th><td>截面高度<b>(mm)</b></td><td><b>750</b></td><td><input type="checkbox" aria-label="附加 截面高度"></td></tr>
        <tr><th>6</th><td>轴线距左边线距离</td><td><b>(280)</b></td><td><input type="checkbox" aria-label="附加 轴线距离"></td></tr>
        <tr><th>7</th><td class="bl">纵筋</td><td></td><td><input type="checkbox" aria-label="附加 纵筋"></td></tr>
        <tr><th>8</th><td class="bl">其它钢筋</td><td></td><td></td></tr>
        <tr><th>9</th><td>备注</td><td></td><td></td></tr>
        <tr class="gr ex"><th>10</th><td><button aria-label="展开"></button>其它属性</td><td></td><td></td></tr>
        <tr class="gr ex"><th>18</th><td><button aria-label="展开"></button>锚固搭接</td><td></td><td></td></tr>
        <tr class="gr ex"><th>27</th><td><button aria-label="展开"></button>显示样式</td><td></td><td></td></tr>
      </tbody>
    </table>
    </div>
  </aside>
</main>

<footer class="status">
  <span class="s1"><b>X=27431 Y=-1640</b></span><span class="s2">层高<b>:3m</b></span><span class="s3">底标高<b>:15.37m</b></span><span class="s4"><b>0</b></span><span class="s5">按鼠标左键指定第一个端点，按右键中止或<b>ESC</b>取消</span><span class="s6"><b>601.4 FPS</b></span>
</footer>

<div class="task">
  <div class="quick">
    <button aria-label="开始"><svg class="orb"><use href="#orb"/></svg></button>
    <button aria-label="浏览器"><svg class="gi" viewBox="0 0 40 36"><use href="#g" x="0" y="3" width="32" height="32"/><path d="M25 13q3-2 3-7 4-6 8 0 0 5 3 7z" fill="#f0ac1c"/><circle cx="32" cy="14" r="2" fill="#c97f0c"/></svg></button>
    <button aria-label="显示桌面"><svg class="wi"><use href="#desk"/></svg></button>
    <button aria-label="切换窗口"><svg class="wi"><use href="#flip"/></svg></button>
  </div>
  <div class="grp"><button><svg><use href="#chrome"/></svg><span>为什么我的...</span></button></div>
  <button class="bd" aria-label="网盘"><svg><use href="#baidu"/></svg></button>
  <div class="grp"><button><svg><use href="#wfold"/></svg><span>签证单</span></button><button><svg><use href="#wfold"/></svg><span>塔吊基础签...</span></button></div>
  <div class="grp"><button><svg><use href="#wechat"/></svg><span>微信</span></button></div>
  <div class="grp"><button><svg><use href="#photo"/></svg><span>二层板 - Wi...</span></button><button><svg><use href="#photo"/></svg><span>屋面板 - Wi...</span></button></div>
  <div class="grp"><button><svg><use href="#acad"/></svg><span>报告厅结施_...</span></button><button><svg><use href="#acad"/></svg><span>报告厅施工...</span></button><button><svg><use href="#acad"/></svg><span>保安镇小学...</span></button></div>
  <div class="grp act"><button><svg><use href="#app"/></svg><span>广联达—钢...</span></button></div>
  <div class="tray"><svg class="kb"><use href="#kbd"/></svg><svg><use href="#tcloud"/></svg><svg><use href="#wechat"/></svg><svg><use href="#g"/></svg><svg><use href="#t360"/></svg><svg><use href="#tstar"/></svg><svg><use href="#tflag"/></svg><svg><use href="#tnet"/></svg><svg><use href="#tvol"/></svg></div>
  <time><span>15:48</span><span>2018/11/26</span></time>
  <button class="peek" aria-label="显示桌面"></button>
</div>

<div class="speed">
  <div class="ball">69%</div>
  <div class="rates"><span><i class="up">↑</i>0.03K/s</span><span><i class="down">↓</i>0.07K/s</span></div>
  <svg viewBox="0 0 20 20"><circle cx="9" cy="11" r="8" fill="#3c7fe0" stroke="#8fb4ea"/><path d="M9 7v8M5 11h8" stroke="#fff" stroke-width="2"/><circle cx="15" cy="5" r="4" fill="#d8322c"/></svg>
</div>
<script src="plan.js"></script>
</body>
</html>
```
FILE: styles.css
```css
* { box-sizing: border-box; }
html, body { height: 100%; }
body {
  margin: 0; display: flex; flex-direction: column; min-height: 100vh; overflow: hidden;
  background: #f0f0f0; color: #000;
  font: 12px/16px "Noto Sans CJK SC", "Noto Sans", sans-serif;
}
button, input, select { font: inherit; color: inherit; margin: 0; }
button { border: 0; background: none; padding: 0; white-space: nowrap; }
ul { list-style: none; margin: 0; padding: 0; }
h1, h2 { margin: 0; font: inherit; }
b { font: 10px/14px "DejaVu Sans Mono", monospace; white-space: pre; }
svg { display: block; flex: none; }
.sprite { position: absolute; width: 0; height: 0; }
.i { width: 16px; height: 16px; }

/* window title */
.title {
  position: relative; flex: none; display: flex; align-items: center; gap: 5px; height: 22px;
  background: linear-gradient(90deg, #c3d6ea 0, #a9c6e4 30%, #7fa9d6 48%, #9ccbf6 52%, #a4d0f8 70%, #8dbdee 88%, #2f5c90 92%, #1f4878 100%);
  border-bottom: 1px solid #4c5a6c; overflow: hidden;
}
.title h1 { position: relative; font: 12px/16px "Noto Sans", "Noto Sans CJK SC", sans-serif; }
.title > .i { position: relative; }
.glass { position: absolute; inset: 0; }
.glass i { position: absolute; filter: blur(3px); }
.g1 { left: 540px; top: 10px; width: 400px; height: 8px; background: #6f96c2; opacity: .6; }
.g2 { left: 948px; top: 0; width: 2px; height: 22px; background: #2f5580; }
.g3 { left: 978px; top: 11px; width: 164px; height: 7px; background: #24405f; opacity: .8; }
.g4 { left: 1320px; top: 9px; width: 190px; height: 12px; background: #7cb1e6; }
.g5 { left: 1530px; top: 9px; width: 200px; height: 12px; background: #78aee4; }
.win { position: relative; display: flex; align-self: flex-start; margin-left: auto; margin-right: 3px; border: 1px solid #2a3a50; border-top: 0; border-radius: 0 0 5px 5px; overflow: hidden; }
.win button { width: 27px; height: 17px; display: grid; place-items: center; background: linear-gradient(#c3d0de 45%, #7d93ab 50%, #a4b8cc); border-right: 1px solid #3b4d64; }
.win .close { width: 47px; background: linear-gradient(#e0a090 40%, #bb3322 50%, #d9674a); border: 0; }
.win svg { width: 12px; height: 12px; }

/* menu */
.menu { flex: none; display: flex; align-items: center; gap: 10px; height: 27px; padding-left: 4px; border-bottom: 1px solid #a0a0a0; border-top: 1px solid #fff; }
.menu .h { margin-right: -1px; }

/* tool bars */
.bars { flex: none; display: flex; height: 29px; }
.work > .bars:first-child { height: 28px; }
.bar { display: flex; align-items: center; padding: 0 3px 0 4px; border-right: 1px solid #a0a0a0; border-bottom: 1px solid #a0a0a0; border-top: 1px solid #fff; }
.h { flex: none; width: 2px; height: 24px; margin-right: 1px; border-left: 1px solid #a0a0a0; border-right: 1px solid #fff; }
.s { flex: none; width: 1px; height: 25px; margin: 0 2px 0 3px; background: #a0a0a0; }
.bar button { display: flex; align-items: center; gap: 4px; height: 22px; padding: 0 3px 0 4px; }
.bar .dn { background: #f9f9f9; box-shadow: inset 1px 1px #a0a0a0, inset -1px -1px #fff; }
.off { color: #a0a0a0; text-shadow: 1px 1px #fff; }
.a { width: 0; height: 0; margin-left: 1px; border: 3px solid transparent; border-top-color: currentColor; border-bottom: 0; }
.a.t { margin-left: -2px; }
select {
  appearance: none; height: 20px; margin: 0 3px; padding: 0 12px 0 1px; border: 0; border-radius: 0; outline: 0;
  background: #fff url("data:image/svg+xml,%3Csvg xmlns='http://www.w3.org/2000/svg' width='9' height='20'%3E%3Cpath d='M0 0h9v20H0z' fill='%23f0f0f0'/%3E%3Cpath d='M1 9h6l-3 3z'/%3E%3C/svg%3E") no-repeat right;
}
.w54 { width: 53px; }
.w66 { width: 66px; }
.w40 { width: 40px; margin: 0; }
.combo { display: flex; align-items: center; margin: 0 2px; padding-left: 2px; gap: 2px; background: #fff; }

/* panels */
main { flex: 1; min-height: 0; display: flex; }
.cap { display: flex; align-items: center; gap: 10px; flex: none; height: 16px; font-size: 13px; line-height: 14px; border: 1px solid #808080; border-radius: 1px; }
.cap svg { width: 9px; height: 9px; }
.cap svg:first-of-type { margin-left: auto; }
.cap svg:last-of-type { margin-right: 4px; }
.cap.on { background: #0055e5; color: #fff; border-color: #0055e5; }
.nav { width: 166px; flex: none; display: flex; flex-direction: column; padding: 1px 0 1px; }
.nav .cap { margin-bottom: 2px; }
.tab { flex: none; height: 22px; margin: 0 1px; border: 1px solid; border-color: #fff #a0a0a0 #a0a0a0; }
.pm { flex: none; height: 26px; margin: 0 1px; padding: 6px 6px; border: 1px solid #a0a0a0; border-width: 0 1px; }
.pm svg { width: 40px; height: 16px; }
.tree { flex: 1; min-height: 0; overflow: hidden; background: #fff; border: 1px solid #828790; margin: 0 1px 0 2px; padding: 2px 0; }
.tree li { position: relative; }
.r, .tree ul > li { display: flex; align-items: center; height: 16px; white-space: nowrap; }
.r { padding-left: 11px; gap: 5px; }
.r::before { content: ""; width: 8px; height: 8px; background: #999; clip-path: polygon(0 0, 70% 50%, 0 100%, 0 80%, 45% 50%, 0 22%); }
.r.o::before { background: #333; clip-path: polygon(70% 10%, 70% 85%, 0 85%); }
.r > svg { width: 16px; height: 12px; }
.r b { margin-right: -5px; }
.r .sq, .r .cad { width: 14px; height: 14px; }
.tree ul { margin-left: 13px; border-left: 1px dotted #888; }
.tree ul > li { gap: 6px; padding-left: 30px; }
.tree ul > li b { margin-left: -6px; }
.tree ul > li::before { content: ""; position: absolute; left: 18px; top: 0; width: 10px; height: 9px; border-left: 1px dotted #888; border-bottom: 1px dotted #888; }
.tree ul > li:not(:last-child)::after { content: ""; position: absolute; left: 18px; top: 8px; height: 8px; border-left: 1px dotted #888; }
.tree ul svg { width: 14px; height: 14px; }
.hot { display: flex; align-items: center; gap: 6px; height: 16px; margin-left: -3px; padding: 0 3px 0 2px; background: #f4f4f4; border: 1px solid #ddd; border-radius: 2px; }
.tree em { font: bold italic 10px/10px "Liberation Sans", sans-serif; color: #222; background: #ffe600; margin: -6px 0 0 -3px; }
.list { width: 164px; flex: none; display: flex; flex-direction: column; margin: 1px 3px 1px 1px; }
.ltools { flex: none; display: flex; align-items: center; gap: 7px; height: 27px; padding-left: 5px; border-bottom: 1px solid #a0a0a0; }
.ltools button { display: flex; align-items: center; gap: 4px; }
.search { flex: none; display: flex; align-items: center; gap: 4px; height: 27px; padding-left: 1px; }
.search input { width: 138px; height: 22px; border: 1px solid #ddd; border-radius: 2px; padding: 0 2px; background: #fff; }
.search input::placeholder { color: #808080; opacity: 1; }
.comp { margin: 0; }
.comp ul { border: 0; }
.cur { display: flex; align-items: center; height: 16px; padding: 0 6px 0 9px; margin-left: -4px; background: #316ac5; }
.tree .cur svg { width: 10px; height: 10px; }
.tree ul > li .cur b { margin-left: 5px; }

/* drawing area */
.work { flex: 1; min-width: 0; display: flex; flex-direction: column; }
.work > .bars { padding-left: 1px; }
.work > .foot { padding-left: 0; }
.canvas { position: relative; flex: 1; min-height: 0; background: #000; }
#plan { width: 100%; height: 100%; }
#plan .ax { stroke: #008000; fill: none; }
#plan .gr { stroke: #f00; }
#plan text { fill: #e8e8e8; font: 17px "Noto Sans", sans-serif; }
.dynin { position: absolute; left: 864px; top: 660px; display: flex; gap: 4px; }
.dynin input { height: 18px; padding: 0; border: 1px solid #707070; font: 10px/14px "DejaVu Sans Mono", monospace; color: #fff; border-radius: 0; }
.dx { width: 73px; background: linear-gradient(#39f, #39f) 1px 2px / 55px 12px no-repeat #fff; }
.dy { width: 69px; background: #161450; }
.foot { height: 30px; padding-bottom: 1px; }
.num { display: flex; align-items: center; gap: 4px; margin-left: 1px; color: #a0a0a0; font-size: 13px; }
.num input { width: 54px; height: 20px; padding: 0 16px 0 0; border: 1px solid #fff; text-align: right; color: #808080;
  background: #f0f0f0 url("data:image/svg+xml,%3Csvg xmlns='http://www.w3.org/2000/svg' width='12' height='18'%3E%3Cpath d='M3 5h6L6 2zM3 13h6l-3 3z' fill='%23999'/%3E%3C/svg%3E") no-repeat right; }
.num .wide { width: 66px; }
.chk { display: flex; align-items: center; gap: 8px; margin: 0 2px; }
input[type=checkbox] { appearance: none; width: 12px; height: 12px; border: 1px solid #8a8a8a; background: #fff; }

/* properties */
.props { width: 264px; flex: none; margin: 1px 1px 1px 2px; display: flex; flex-direction: column; }
.pbox { flex: 1; margin-top: 2px; padding: 0 1px; background: #fff; border: 1px solid #a0a0a8; }
table { width: 100%; border-collapse: collapse; table-layout: fixed; }
.c1 { width: 21px; } .c3 { width: 86px; } .c4 { width: 31px; }
th, td { height: 19px; padding: 0; border: 1px solid #c0c0c0; border-left: 0; font-weight: normal; text-align: left; line-height: 16px; white-space: nowrap; }
thead th { height: 22px; text-align: center; background: linear-gradient(#fafafa, #ececec); }
thead .hv { background: linear-gradient(#f9d99a, #f0bf60); color: #600050; }
tbody th { background: #f2f2f2; text-align: center; font: 10px/14px "DejaVu Sans Mono", monospace; }
td:nth-child(2) { padding-left: 20px; }
td:nth-child(3) { padding-left: 2px; }
td:last-child { text-align: center; }
td input[type=checkbox] { display: block; margin: 0 auto; width: 13px; height: 13px; background: linear-gradient(135deg, #d8d8d8, #fff); box-shadow: inset 0 0 0 1px #fff; }
.sel th { background: #ffd58c; color: #600050; }
.sel td:nth-child(2) { background: #39f; color: #fff; }
.sel td:nth-child(3) { background: #e0f0ff; }
.bl { color: #00f; }
.gr td { color: #808080; }
.ex td:nth-child(2) { padding-left: 3px; }
.ex button { width: 12px; height: 12px; margin-right: 5px; vertical-align: -1px; border: 1px solid #999;
  background: linear-gradient(#000, #000) center / 7px 1px no-repeat, linear-gradient(#000, #000) center / 1px 7px no-repeat, #eee; }

/* status */
.status { flex: none; display: flex; gap: 3px; height: 22px; padding: 1px 0; }
.status span { display: block; height: 20px; padding: 1px 1px; border: 1px solid; border-color: #a0a0a0 #fff #fff #a0a0a0; white-space: nowrap; overflow: hidden; }
.s1 { width: 147px; } .s2 { width: 77px; } .s3 { width: 97px; } .s4 { width: 47px; } .s5 { flex: 1; } .s6 { width: 70px; }

/* task bar */
.task { flex: none; display: flex; align-items: stretch; height: 40px; gap: 4px; color: #fff; border-top: 1px solid #0a1c30;
  background: linear-gradient(100deg, #2a79a4 0, #4189ae 9%, #3a82ae 14%, #2f74a3 40%, #2a689e 62%, #1d4f88 78%, #123f72 90%, #173f70 100%); }
.quick { width: 234px; display: flex; align-items: center; padding-left: 9px; gap: 22px; }
.quick button:nth-child(3) { margin-left: 2px; }
.quick button:nth-child(4) { margin-left: 5px; }
.orb { width: 36px; height: 36px; }
.gi { width: 40px; height: 36px; }
.wi { width: 32px; height: 26px; }
.grp { display: flex; border: 1px solid #123a5c; border-radius: 3px; box-shadow: inset 0 0 0 1px rgba(255,255,255,.35); background: linear-gradient(160deg, rgba(255,255,255,.5), rgba(255,255,255,.12) 45%, rgba(0,40,90,.05) 50%, rgba(255,255,255,.08)); }
.grp button { width: 126px; display: flex; align-items: center; gap: 4px; padding-left: 7px; }
.grp button + button { width: 128px; border-left: 1px solid rgba(0,40,80,.5); }
.grp svg { width: 32px; height: 32px; }
.grp.act { background: linear-gradient(160deg, #dfe6ee, #9db1cb 45%, #7390b6 50%, #93abc8); }
.bd { width: 54px; display: grid; place-items: center; }
.bd svg { width: 32px; height: 32px; }
.tray { display: flex; align-items: center; gap: 8px; margin-left: auto; }
.tray svg { width: 16px; height: 16px; }
.tray .kb { margin-right: 7px; margin-top: -4px; }
.task time { display: flex; flex-direction: column; justify-content: center; gap: 2px; width: 76px; text-align: center; }
.peek { width: 14px; border: 1px solid #5c7da3; background: linear-gradient(#41618a, #1b3a63); }

/* network speed widget, floats over the desktop */
.speed { position: absolute; right: 66px; bottom: 135px; display: flex; align-items: center; height: 39px; width: 103px; padding-left: 28px; gap: 5px; border: 1px solid #aaa; border-radius: 0 20px 20px 0; background: linear-gradient(#fafafa, #dedede); box-shadow: 0 3px 6px rgba(0,0,0,.3); font: 9px/15px "Noto Sans", sans-serif; }
.ball { position: absolute; left: -25px; top: -6px; width: 49px; height: 49px; border: 3px solid #e8e8e8; border-radius: 50%; box-shadow: 0 0 0 1px #999, inset 0 0 0 2px #128055, 0 3px 5px rgba(0,0,0,.4); background: linear-gradient(#157a58 32%, #4cd062 34%, #52d868); color: #fff; font: 14px/43px "Liberation Sans", sans-serif; text-align: center; }
.rates span { display: flex; gap: 5px; white-space: nowrap; }
.rates i { font: bold 11px/15px "DejaVu Sans", sans-serif; }
.up { color: #e8553a; }
.down { color: #169050; }
.speed > svg { width: 20px; height: 20px; margin-left: -2px; }
```
FILE: plan.js
```js
// Draws the axis grid with its bubbles and dimension chains.
const plan = document.getElementById('plan');
const xs = Array.from({ length: 12 }, (_, i) => Math.floor(592.6 + i * 78.73) + 0.5);
const rows = [['K', 400.5], ['J', 433.5], ['H', 453.5], ['G', 492.5], ['F', 509.5], ['E', 564.5], ['D', 619.5], ['C', 711.5], ['B', 750.5], ['A', 783.5]];
const spans = [1500, 900, 1800, 800, 2500, 2500, 4200, 1800, 1500];
const x0 = xs[0], x1 = xs[11], y0 = 400.5, y1 = 783.5;
const out = [];
const line = (a, b, c, d, k = 'ax') => out.push(`<line class="${k}" x1="${a}" y1="${b}" x2="${c}" y2="${d}"/>`);
const bubble = (x, y) => out.push(`<circle class="ax" cx="${x}" cy="${y}" r="12.5"/>`);
const text = (x, y, s, anchor = 'middle') => out.push(`<text x="${x}" y="${y}" text-anchor="${anchor}">${s}</text>`);
const vtext = (x, y, s) => out.push(`<text transform="translate(${x} ${y}) rotate(-90)" text-anchor="middle">${s}</text>`);

xs.forEach((x, i) => {
  line(x, 302, x, y0);
  line(x, y1, x, 881);
  bubble(x, 289.5);
  bubble(x, 894.5);
  text(x + 2, 295, i + 1);
  text(x + 2, 900, i + 1);
  [367.5, 815.5].forEach(y => line(x - 4, y + 5, x + 4, y - 4));
  if (i < 11) {
    text(x + 44, 363, 3600);
    text(x + 44, 833, 3600);
  }
});
[335.5, 367.5, 815.5, 848.5].forEach(y => line(x0, y, x1, y));
[335.5, 848.5].forEach(y => [x0, x1].forEach(x => line(x - 4, y + 4, x + 4, y - 4)));
text(1030, 330, 39600);
text(1030, 866, 39600);

rows.forEach(([name, y], i) => {
  line(495, y, x0, y);
  line(x1, y, 1557, y);
  bubble(481.5, y);
  bubble(1570, y);
  text(478, y + 5, name, 'start');
  text(1566, y + 5, name, 'start');
  [560.5, 1491.5].forEach(x => line(x - 4, y - 4, x + 4, y + 4));
  if (i < 9) {
    const m = (y + rows[i + 1][1]) / 2 - 4;
    vtext(555, m, spans[i]);
    vtext(1508, m, spans[i]);
  }
});
[527.5, 560.5, 1491.5, 1524.5].forEach(x => line(x, y0, x, y1));
[527.5, 1524.5].forEach(x => [y0, y1].forEach(y => line(x - 4, y - 4, x + 4, y + 4)));
vtext(522, 587, 17500);
vtext(1541, 587, 17500);

xs.forEach(x => line(x, y0, x, y1, 'gr'));
rows.forEach(([, y]) => line(x0, y, x1, y, 'gr'));

// Coordinate system marker
out.push('<path d="M389.500 938V896" stroke="#0f0" stroke-width="3"/><path d="M385 901l4.500-13 4.500 13z" fill="#0f0"/>');
out.push('<path d="M388 938.500h42" stroke="#f00" stroke-width="3"/><path d="M426 934l13 4.500-13 4.500z" fill="#f00"/>');
out.push('<path d="M398 891l5 6 5-6M403 897v6" fill="none" stroke="#0a0"/><path d="M426 918l9 9M435 918l-9 9" stroke="#e00"/>');
plan.innerHTML = out.join('');
```
